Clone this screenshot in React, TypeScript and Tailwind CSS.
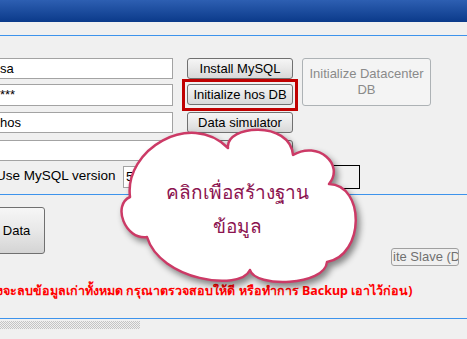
import React from 'react';

const inputCls = 'h-[21px] w-[179px] bg-white border border-[#a3a3a3] flex items-center pl-[5px] text-[13px] text-black overflow-hidden whitespace-nowrap';
const btnCls = 'h-[21px] w-[106px] rounded-[3px] border border-[#707070] bg-gradient-to-b from-[#f6f6f6] via-[#e8e8e8] to-[#d8d8d8] flex items-center justify-center text-[13px] text-black whitespace-nowrap';

// speech cloud, coordinates are page coords minus (100,100)
const cloudPath =
  'M30 97 C24 50 90 10 128 48 C125 25 190 20 193 55 C218 40 245 65 229 84 ' +
  'C265 85 265 155 227 162 C225 186 155 188 150 170 C140 192 60 180 47 137 C25 140 12 105 30 97 Z';

const Cloud = () => (
  <div className="absolute left-[100px] top-[100px] w-[280px] h-[200px]">
    <svg viewBox="0 0 280 200" className="block w-[280px] h-[200px] overflow-visible drop-shadow-[3px_4px_3px_rgba(0,0,0,0.45)]">
      <path d={cloudPath} fill="#ffffff" stroke="#cc3a66" strokeWidth="2.5" strokeLinejoin="round" />
    </svg>
    <div className="absolute left-[37px] top-[75px] w-[200px] text-center text-[19px] leading-[34px] text-[#8c1450] font-['Tahoma','Noto_Sans',sans-serif]">
      <div>คลิกเพื่อสร้างฐาน</div>
      <div>ข้อมูล</div>
    </div>
  </div>
);

export default function App() {
  return (
    <div className="relative w-[467px] h-[339px] overflow-hidden bg-[#f0f0f0] font-['Liberation_Sans',Arial,sans-serif] text-[13px]">
      {/* title bar */}
      <div className="h-[22px] bg-gradient-to-b from-[#2d5fb2] to-[#0a3a8a]" />
      <div className="mt-[13px] h-px bg-[#3d93ec]" />

      {/* upper form */}
      <div className="mt-[22px] flex">
        <div className="ml-[-6px] flex flex-col">
          <div className={inputCls}>sa</div>
          <div className={`${inputCls} mt-[5px] h-[22px] items-start pt-[3px] text-[11px] leading-none`}>***</div>
          <div className={`${inputCls} mt-[6px] border-[#5b9ee8]`}>hos</div>
          <div className={`${inputCls} mt-[7px]`} />
        </div>
        <div className="ml-[14px] flex flex-col">
          <div className={btnCls}>Install MySQL</div>
          <div className="relative mt-[5px]">
            <div className={btnCls}>Initialize hos DB</div>
            <div className="absolute -left-[5px] -right-[5px] -top-[5px] -bottom-[6px] border-[3px] border-[#c00000]" />
          </div>
          <div className={`${btnCls} mt-[7px]`}>Data simulator</div>
          <div className={`${btnCls} mt-[7px]`}>Load</div>
        </div>
        <div className="ml-[9px] w-[129px] h-[48px] rounded-[3px] border border-[#adb2b5] bg-[#f4f4f4] flex flex-col items-center justify-center text-[#8a8a8a] leading-[16px]">
          <div>Initialize Datacenter</div>
          <div>DB</div>
        </div>
      </div>

      {/* mysql version row */}
      <div className="mt-[4px] flex items-center h-[23px]">
        <span className="ml-[-4px] w-[119px] shrink-0 whitespace-nowrap text-[13.5px]">Use MySQL version</span>
        <div className="ml-[8px] w-[60px] h-[22px] bg-white border border-[#a3a3a3] flex items-center pl-[2px]">5</div>
        <div className="ml-[147px] w-[30px] h-[24px] border border-black" />
      </div>
      <div className="mt-[6px] h-px bg-[#3d93ec]" />

      {/* lower area */}
      <div className="mt-[12px] flex">
        <div className="ml-[-12px] w-[57px] h-[47px] rounded-[3px] border border-[#707070] bg-gradient-to-b from-[#f6f6f6] via-[#e8e8e8] to-[#d4d4d4] flex items-center justify-center">
          Data
        </div>
        <div className="ml-[346px] mt-[41px] w-[68px] h-[18px] rounded-[3px] border border-[#a0a0a0] overflow-hidden whitespace-nowrap pl-[1px] leading-[16px] text-[#707070]">
          ite Slave (DB)
        </div>
      </div>

      <div className="mt-[16px] ml-[-15px] whitespace-nowrap font-bold text-[#ff0000] text-[12.5px] leading-[18px] font-['Tahoma','Noto_Sans',sans-serif]">
        (ทั้งจะลบข้อมูลเก่าทั้งหมด กรุณาตรวจสอบให้ดี หรือทำการ Backup เอาไว้ก่อน)
      </div>

      <div className="mt-[18px] h-px bg-[#3d93ec]" />
      <div className="mt-[2px] w-[140px] h-[8px] bg-[repeating-conic-gradient(#c4c4c4_0_25%,transparent_0_50%)] bg-[length:2px_2px]" />

      <Cloud />
    </div>
  );
}
